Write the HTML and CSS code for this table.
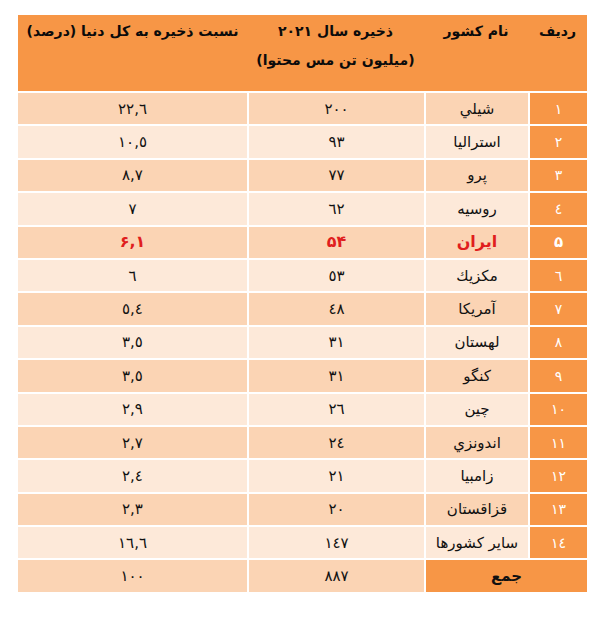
FILE: index.html
```html
<!DOCTYPE html>
<html lang="fa" dir="rtl">
<head>
<meta charset="utf-8">
<title>ذخایر مس</title>
<link rel="stylesheet" href="styles.css">
</head>
<body>
<table class="data">
  <colgroup>
    <col class="c-num">
    <col class="c-name">
    <col class="c-val">
    <col class="c-pct">
  </colgroup>
  <thead>
    <tr class="head">
      <th>ردیف</th>
      <th>نام کشور</th>
      <th>ذخیره سال ۲۰۲۱<br>(میلیون تن مس محتوا)</th>
      <th>نسبت ذخیره به کل دنیا (درصد)</th>
    </tr>
  </thead>
  <tbody>
    <tr class="dark"><td class="num">١</td><td>شيلي</td><td>٢٠٠</td><td class="pct">٢٢,٦</td></tr>
    <tr class="light"><td class="num">٢</td><td>استراليا</td><td>٩٣</td><td class="pct">١٠,٥</td></tr>
    <tr class="dark"><td class="num">٣</td><td>پرو</td><td>٧٧</td><td class="pct">٨,٧</td></tr>
    <tr class="light"><td class="num">٤</td><td>روسيه</td><td>٦٢</td><td class="pct">٧</td></tr>
    <tr class="dark hl"><td class="num">۵</td><td>ایران</td><td>۵۴</td><td class="pct">۶,۱</td></tr>
    <tr class="light"><td class="num">٦</td><td>مكزيك</td><td>٥٣</td><td class="pct">٦</td></tr>
    <tr class="dark"><td class="num">٧</td><td>آمريكا</td><td>٤٨</td><td class="pct">٥,٤</td></tr>
    <tr class="light"><td class="num">٨</td><td>لهستان</td><td>٣١</td><td class="pct">٣,٥</td></tr>
    <tr class="dark"><td class="num">٩</td><td>كنگو</td><td>٣١</td><td class="pct">٣,٥</td></tr>
    <tr class="light"><td class="num">١٠</td><td>چين</td><td>٢٦</td><td class="pct">٢,٩</td></tr>
    <tr class="dark"><td class="num">١١</td><td>اندونزي</td><td>٢٤</td><td class="pct">٢,٧</td></tr>
    <tr class="light"><td class="num">١٢</td><td>زامبيا</td><td>٢١</td><td class="pct">٢,٤</td></tr>
    <tr class="dark"><td class="num">١٣</td><td>قزاقستان</td><td>٢٠</td><td class="pct">٢,٣</td></tr>
    <tr class="light"><td class="num">١٤</td><td>ساير كشورها</td><td>١٤٧</td><td class="pct">١٦,٦</td></tr>
    <tr class="dark total"><td class="sum" colspan="2">جمع</td><td>٨٨٧</td><td class="pct">١٠٠</td></tr>
  </tbody>
</table>
</body>
</html>
```

FILE: styles.css
```css
html, body {
  margin: 0;
  padding: 0;
  background: #ffffff;
}

body {
  font-family: "DejaVu Sans", sans-serif;
  color: #111111;
}

.data {
  margin: 15px 18px 0 0;
  width: 569px;
  border-collapse: separate;
  border-spacing: 0;
  table-layout: fixed;
}

.c-num { width: 59px; }
.c-name { width: 104px; }
.c-val { width: 177px; }
.c-pct { width: 229px; }

.head th {
  background: #f79646;
  height: 76px;
  box-sizing: border-box;
  padding: 2px 4px 0;
  vertical-align: top;
  font-size: 14px;
  font-weight: bold;
  line-height: 29px;
  color: #0b0b0b;
  text-align: center;
}

.data td {
  height: 31.4px;
  padding: 0 4px;
  border-top: 2px solid #ffffff;
  border-left: 2px solid #ffffff;
  text-align: center;
  vertical-align: middle;
  font-size: 15px;
  line-height: 20px;
  box-sizing: content-box;
}

.data td.pct {
  border-left: none;
}

.dark td { background: #fbd4b4; }
.light td { background: #fde9d9; }

.data td.num,
.data td.sum {
  background: #f79646;
  color: #ffffff;
  font-size: 14px;
}

.data td.sum {
  color: #111111;
  font-weight: bold;
  font-size: 15px;
}

.hl td {
  color: #e01e1e;
  font-weight: bold;
  font-size: 16px;
}

.data .hl td.num {
  color: #ffffff;
  font-size: 15px;
}
```
